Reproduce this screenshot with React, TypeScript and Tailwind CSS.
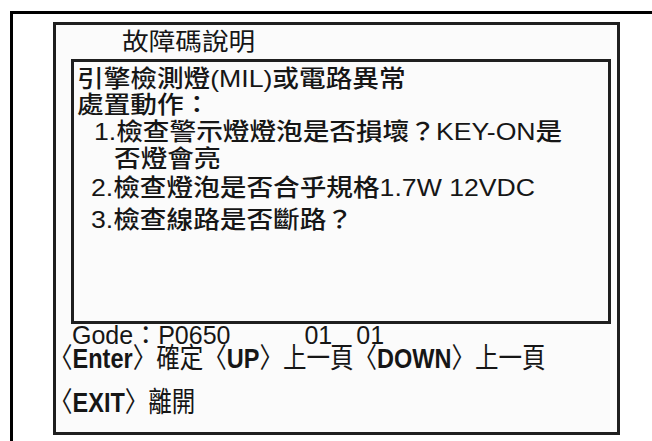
import React from 'react';

const Line: React.FC<{ className?: string; children: React.ReactNode }> = ({ className = '', children }) => (
    <div className={`h-[26px] leading-[26px] whitespace-nowrap ${className}`}>
        <span className="inline-block origin-left scale-x-[1.11]">{children}</span>
    </div>
);

export default function App() {
    return (
        <div className="relative w-[652px] h-[441px] overflow-hidden bg-white text-[#161616] font-['Liberation_Sans','Noto_Sans_CJK_TC',sans-serif]">
            <div className="ml-[10px] mt-[11px] w-[720px] h-[500px] border-t-[3px] border-l-[3px] border-black pl-[40px] pt-[8px]">
                {/* panel */}
                <div className="w-[567px] h-[413px] border-[3px] border-[#1f1f1f] bg-[#fbfbfb]">
                    <div className="h-[34px] leading-[34px] pl-[66px] text-[24px] whitespace-nowrap">
                        <span className="inline-block origin-left scale-x-[1.11]">故障碼說明</span>
                    </div>

                    <div className="ml-[15px] w-[540px] h-[265px] border-[3px] border-[#1f1f1f] text-[24px] font-medium">
                        <Line className="mt-[4px] pl-[3px]">引擎檢測燈(MIL)或電路異常</Line>
                        <Line className="pl-[3px]">處置動作：</Line>
                        <Line className="mt-[1px] pl-[20px]">1.檢查警示燈燈泡是否損壞？KEY-ON是</Line>
                        <Line className="mt-[1px] pl-[40px]">否燈會亮</Line>
                        <Line className="mt-[3px] pl-[17px]">2.檢查燈泡是否合乎規格1.7W 12VDC</Line>
                        <Line className="mt-[6px] pl-[17px]">3.檢查線路是否斷路？</Line>
                    </div>

                    <div className="h-[21px] leading-[23px] pl-[16px] text-[25px] whitespace-nowrap">
                        Gode：P0650<span className="ml-[74px]">01</span><span className="ml-[24px]">01</span>
                    </div>
                    <div className="mt-[2px] h-[24px] leading-[24px] ml-[-7px] text-[28px] whitespace-nowrap">
                        <span className="inline-block origin-left scale-x-[0.84]">
                            〈<b>Enter</b>〉確定〈<b>UP</b>〉上一頁〈<b>DOWN</b>〉上一頁
                        </span>
                    </div>
                    <div className="mt-[20px] h-[24px] leading-[24px] ml-[-7px] text-[28px] whitespace-nowrap">
                        <span className="inline-block origin-left scale-x-[0.84]">
                            〈<b>EXIT</b>〉離開
                        </span>
                    </div>
                </div>
            </div>
        </div>
    );
}
